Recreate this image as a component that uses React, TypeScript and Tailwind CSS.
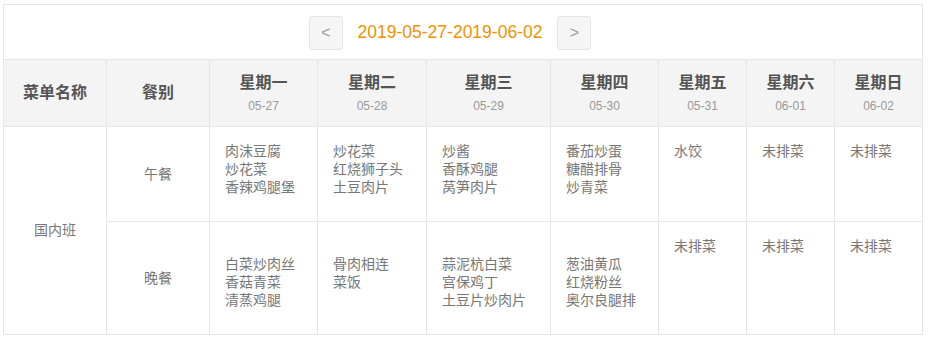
type Dia = {
  nome: string
  data: string
  almoco: string[]
  jantar: string[]
  // segunda a quinta: o jantar começa uma linha abaixo
  recuo?: boolean
}

const dias: Dia[] = [
  { nome: '星期一', data: '05-27', almoco: ['肉沫豆腐', '炒花菜', '香辣鸡腿堡'], jantar: ['白菜炒肉丝', '香菇青菜', '清蒸鸡腿'], recuo: true },
  { nome: '星期二', data: '05-28', almoco: ['炒花菜', '红烧狮子头', '土豆肉片'], jantar: ['骨肉相连', '菜饭'], recuo: true },
  { nome: '星期三', data: '05-29', almoco: ['炒酱', '香酥鸡腿', '莴笋肉片'], jantar: ['蒜泥杭白菜', '宫保鸡丁', '土豆片炒肉片'], recuo: true },
  { nome: '星期四', data: '05-30', almoco: ['番茄炒蛋', '糖醋排骨', '炒青菜'], jantar: ['葱油黄瓜', '红烧粉丝', '奥尔良腿排'], recuo: true },
  { nome: '星期五', data: '05-31', almoco: ['水饺'], jantar: ['未排菜'] },
  { nome: '星期六', data: '06-01', almoco: ['未排菜'], jantar: ['未排菜'] },
  { nome: '星期日', data: '06-02', almoco: ['未排菜'], jantar: ['未排菜'] },
]

const larguras = ['w-[103px]', 'w-[103px]', 'w-[108px]', 'w-[109px]', 'w-[124px]', 'w-[108px]', 'w-[88px]', 'w-[88px]', 'w-[88px]']

function Pratos({ itens, recuo }: { itens: string[]; recuo?: boolean }) {
  return (
    <div className={`text-[14px] leading-[18px] text-[#777] ${recuo ? 'pt-[18px]' : ''}`}>
      {itens.map((p) => (
        <div key={p}>{p}</div>
      ))}
    </div>
  )
}

export default function App() {
  return (
    <div
      className="ml-[3px] mt-[4px] w-[920px] bg-white"
      style={{ fontFamily: '"Liberation Sans", "Noto Sans CJK SC", sans-serif' }}
    >
      {/* Navegação da semana */}
      <div className="h-[55px] border-t border-l border-r border-[#e6e6e6] flex items-center justify-center gap-[15px] pt-px pr-[26px]">
        <button
          type="button"
          className="w-[34px] h-[34px] rounded-[3px] bg-[#f5f5f5] border border-[#e4e4e4] flex items-center justify-center text-[16px] text-[#999] leading-none"
        >
          &lt;
        </button>
        <span className="text-[17.5px] text-[#f29100] leading-none">2019-05-27-2019-06-02</span>
        <button
          type="button"
          className="w-[34px] h-[34px] rounded-[3px] bg-[#f5f5f5] border border-[#e4e4e4] flex items-center justify-center text-[16px] text-[#999] leading-none"
        >
          &gt;
        </button>
      </div>

      <table className="w-[920px] table-fixed border-collapse">
        <colgroup>
          {larguras.map((w, i) => (
            <col key={i} className={w} />
          ))}
        </colgroup>
        <thead>
          <tr className="bg-[#f4f4f4]">
            <th className="h-[67px] border border-[#e6e6e6] text-[16px] font-bold text-[#555] align-middle">菜单名称</th>
            <th className="border border-[#e6e6e6] text-[16px] font-bold text-[#555] align-middle">餐别</th>
            {dias.map((d) => (
              <th key={d.nome} className="border border-[#e6e6e6] align-middle">
                <div className="text-[16px] leading-[22px] font-bold text-[#555]">{d.nome}</div>
                <div className="mt-[3px] text-[12px] leading-[18px] font-normal text-[#999]">{d.data}</div>
              </th>
            ))}
          </tr>
        </thead>
        <tbody>
          <tr>
            <td rowSpan={2} className="border border-[#e6e6e6] text-center text-[14px] text-[#777] align-middle">
              国内班
            </td>
            <td className="h-[95px] border border-[#e6e6e6] text-center text-[14px] text-[#777] align-middle">午餐</td>
            {dias.map((d) => (
              <td key={d.nome} className="border border-[#e6e6e6] align-top pl-[15px] pt-[15px]">
                <Pratos itens={d.almoco} />
              </td>
            ))}
          </tr>
          <tr>
            <td className="h-[113px] border border-[#e6e6e6] text-center text-[14px] text-[#777] align-middle">晚餐</td>
            {dias.map((d) => (
              <td key={d.nome} className="border border-[#e6e6e6] align-top pl-[15px] pt-[15px]">
                <Pratos itens={d.jantar} recuo={d.recuo} />
              </td>
            ))}
          </tr>
        </tbody>
      </table>
    </div>
  )
}
